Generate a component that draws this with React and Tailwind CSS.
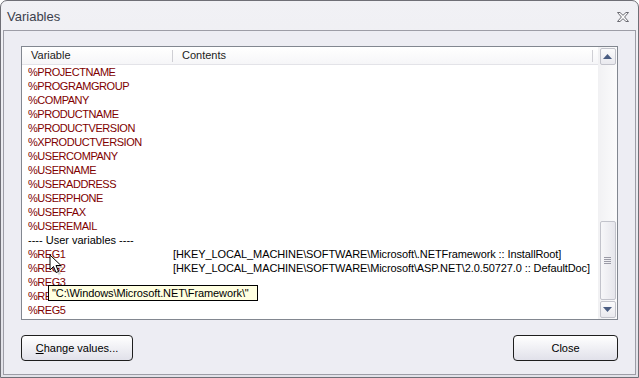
const VARS = [
  '%PROJECTNAME',
  '%PROGRAMGROUP',
  '%COMPANY',
  '%PRODUCTNAME',
  '%PRODUCTVERSION',
  '%XPRODUCTVERSION',
  '%USERCOMPANY',
  '%USERNAME',
  '%USERADDRESS',
  '%USERPHONE',
  '%USERFAX',
  '%USEREMAIL',
];

const USER_VARS = [
  { name: '%REG1', value: '[HKEY_LOCAL_MACHINE\\SOFTWARE\\Microsoft\\.NETFramework :: InstallRoot]' },
  { name: '%REG2', value: '[HKEY_LOCAL_MACHINE\\SOFTWARE\\Microsoft\\ASP.NET\\2.0.50727.0 :: DefaultDoc]' },
  { name: '%REG3', value: '' },
  { name: '%REG4', value: '' },
  { name: '%REG5', value: '' },
];

function Row({ name, value, plain }) {
  return (
    <div className="flex h-[14px] items-center leading-[14px]">
      <div className={`w-[151px] shrink-0 pl-[6px] ${plain ? 'text-black' : 'tracking-[-0.45px] text-[#800000]'}`}>{name}</div>
      <div className="whitespace-nowrap tracking-[-0.1px] text-black">{value}</div>
    </div>
  );
}

function ScrollButton({ dir }) {
  return (
    <div className="flex h-[17px] w-[16px] items-center justify-center rounded-[2px] border border-[#c2c3cb] bg-gradient-to-b from-[#fbfbfc] to-[#e9e9ee]">
      <svg width="9" height="5" viewBox="0 0 9 5">
        {dir === 'up' ? <path d="M0 5 L4.5 0 L9 5 Z" fill="#4a5d82" /> : <path d="M0 0 L4.5 5 L9 0 Z" fill="#4a5d82" />}
      </svg>
    </div>
  );
}

export default function App() {
  return (
    <div className="h-[378px] w-[639px] overflow-hidden bg-white">
      <div
        className="flex h-[378px] w-[639px] flex-col rounded-t-[7px] border border-[#6f6f76] bg-gradient-to-b from-[#f1f1f5] to-[#e2e2e8]"
        style={{ fontFamily: '"Liberation Sans", Arial, sans-serif' }}
      >
        {/* title bar */}
        <div className="flex h-[29px] shrink-0 items-center justify-between pl-[6px] pr-[9px] pt-[2px]">
          <span className="text-[13px] text-[#3c3f4c]">Variables</span>
          <svg width="12" height="10" viewBox="0 0 12 10">
            <path
              d="M0.5 0.5 H3 L6 3.3 L9 0.5 H11.5 L7.6 5 L11.5 9.5 H9 L6 6.7 L3 9.5 H0.5 L4.4 5 Z"
              fill="#fdfdfd"
              stroke="#6b6b72"
              strokeWidth="1"
              strokeLinejoin="round"
            />
          </svg>
        </div>

        {/* body */}
        <div className="mx-[2px] mb-[2px] flex flex-1 flex-col border border-[#9d9da6] bg-[#ededf3] px-[17px] pt-[15px]">
          <div className="relative flex h-[274px] border border-[#828790] bg-white text-[11px]">
            <div className="flex-1 overflow-hidden">
              {/* header */}
              <div className="flex h-[18px] items-center border-b border-[#e3e3e8] bg-gradient-to-b from-white to-[#f6f6f8] text-[11px] text-[#222]">
                <div className="flex h-full w-[151px] items-center justify-between pl-[9px]">
                  <span>Variable</span>
                  <span className="h-[12px] w-px bg-[#cfcfd4]" />
                </div>
                <div className="flex h-full flex-1 items-center justify-between pl-[9px] pr-[5px]">
                  <span>Contents</span>
                  <span className="h-[12px] w-px bg-[#cfcfd4]" />
                </div>
              </div>
              {VARS.map((v) => (
                <Row key={v} name={v} value="" />
              ))}
              <Row name="---- User variables ----" value="" plain />
              {USER_VARS.map((v) => (
                <Row key={v.name} name={v.name} value={v.value} />
              ))}
            </div>

            {/* scrollbar */}
            <div className="flex w-[19px] flex-col items-center justify-between bg-gradient-to-r from-[#f1f1f3] to-[#fbfbfc] py-[1px]">
              <ScrollButton dir="up" />
              <div className="flex-1" />
              <div className="mb-[1px] flex h-[79px] w-[16px] items-center justify-center rounded-[2px] border border-[#c2c3cb] bg-gradient-to-r from-[#f7f7f9] to-[#e6e6ec]">
                <svg width="7" height="7" viewBox="0 0 7 7">
                  <path d="M0 0.5 H7 M0 2.5 H7 M0 4.5 H7 M0 6.5 H7" stroke="#9a9aa6" strokeWidth="1" />
                </svg>
              </div>
              <ScrollButton dir="down" />
            </div>

            {/* mouse pointer */}
            <svg className="absolute left-[27px] top-[207px]" width="15" height="21" viewBox="0 0 15 21">
              <path d="M2 2 L2 17 L5.5 13.5 L8 19.5 L10.5 18.5 L8 12.5 L13 12.5 Z" fill="#000" opacity="0.18" transform="translate(1.5 1.5)" />
              <path d="M1 1 L1 16 L4.5 12.5 L7 18.5 L9.5 17.5 L7 11.5 L12 11.5 Z" fill="#fff" stroke="#000" strokeWidth="1" strokeLinejoin="miter" />
            </svg>

            {/* tooltip */}
            <div className="absolute left-[26px] top-[238px] flex h-[16px] w-[210px] items-center border border-black bg-[#ffffe1] pl-[3px] text-[11px] tracking-[-0.1px] text-black">
              "C:\Windows\Microsoft.NET\Framework\"
            </div>
          </div>

          <div className="mt-[15px] flex justify-between">
            <button className="flex h-[26px] w-[112px] items-center justify-center rounded-[4px] border border-[#1e1e1e] bg-gradient-to-b from-white to-[#e1e1ea] text-[11px] text-black">
              <span>
                <span className="underline">C</span>hange values...
              </span>
            </button>
            <button className="flex h-[26px] w-[105px] items-center justify-center rounded-[4px] border border-[#1e1e1e] bg-gradient-to-b from-white to-[#e1e1ea] text-[11px] text-black">
              Close
            </button>
          </div>
        </div>
      </div>
    </div>
  );
}
